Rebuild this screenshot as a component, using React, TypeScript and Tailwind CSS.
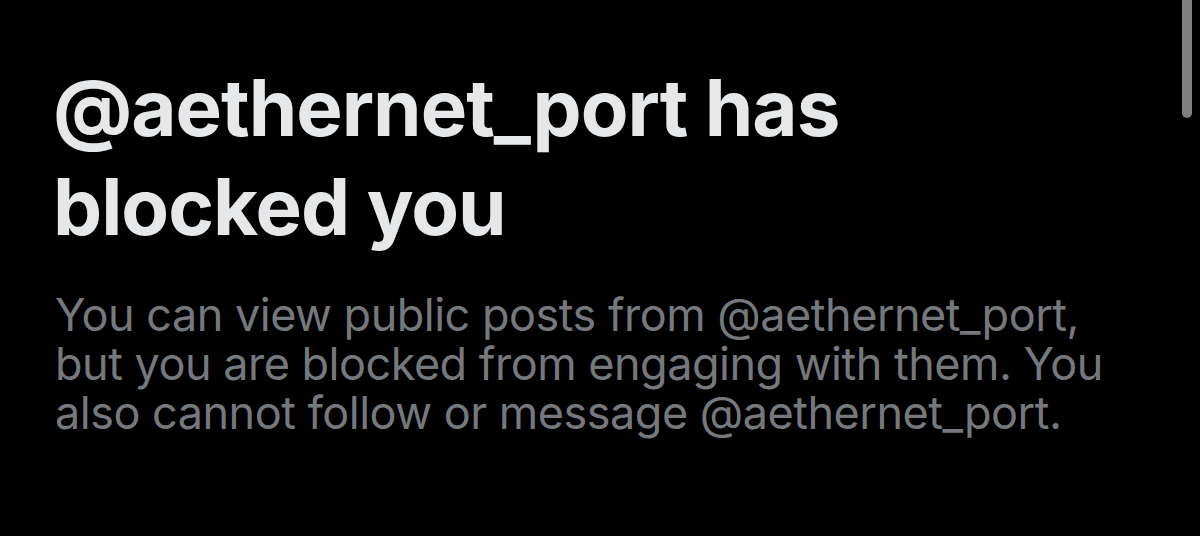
import React from "react";

export default function App() {
  return (
    <div className="relative w-[1200px] h-[536px] overflow-hidden bg-black font-['Inter',sans-serif]">
      <div className="flex flex-col gap-[34px] pl-[53px] pt-[58px]">
        <h1 className="text-[78px] leading-[99px] font-bold text-[#e6e7e8] tracking-[-1px]">
          @aethernet_port has
          <br />
          blocked you
        </h1>
        <p className="pl-[2px] text-[45px] leading-[49px] text-[#75787d] tracking-[-0.5px]">
          You can view public posts from @aethernet_port,
          <br />
          but you are blocked from engaging with them. You
          <br />
          also cannot follow or message @aethernet_port.
        </p>
      </div>
      <div className="absolute right-[8px] top-0 h-[118px] w-[10px] rounded-b-full bg-[#808080]" />
    </div>
  );
}
